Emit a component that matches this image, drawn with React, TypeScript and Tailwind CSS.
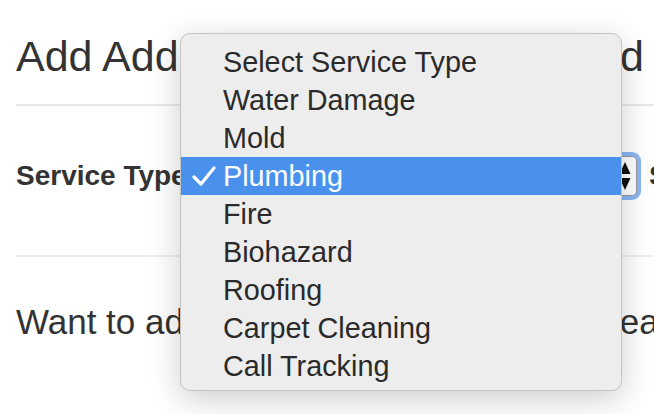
import React from "react";

const options = [
  "Select Service Type",
  "Water Damage",
  "Mold",
  "Plumbing",
  "Fire",
  "Biohazard",
  "Roofing",
  "Carpet Cleaning",
  "Call Tracking",
];

const selected = "Plumbing";

const Check = () => (
  <svg width="24" height="22" viewBox="0 0 24 22" fill="none">
    <path d="M2 12 L9 19 L22 3" stroke="white" strokeWidth="3.2" strokeLinecap="round" strokeLinejoin="round" />
  </svg>
);

const Stepper = () => (
  <svg width="12" height="32" viewBox="0 0 12 32">
    <path d="M6 2 L11.5 14 L0.5 14 Z" fill="#111" />
    <path d="M0.5 18 L11.5 18 L6 30 Z" fill="#111" />
  </svg>
);

const App = () => {
  return (
    <div className="relative w-[654px] h-[414px] overflow-hidden bg-white text-[#333] font-['Liberation_Sans',Arial,sans-serif]">
      <div className="pt-[31px] pl-4">
        <h1 className="text-[43px] leading-[50px] whitespace-nowrap">Add Additional Service Type Grid</h1>
      </div>
      <div className="mt-[23px] ml-4 h-[2px] bg-[#e9e9e9]" />

      <div className="mt-[46px] pl-4 flex items-center h-[48px] whitespace-nowrap">
        <label className="w-[170px] shrink-0 text-[28px] font-bold">Service Type</label>
        <div className="w-[451px] h-[40px] shrink-0 rounded-[5px] border border-[#9a9a9a] bg-white shadow-[0_0_0_4px_#8ab7f4] flex items-center justify-end pr-[5px]">
          <Stepper />
        </div>
        <label className="ml-[12px] shrink-0 text-[28px] font-bold">Sub Service</label>
      </div>

      <div className="mt-[55px] ml-4 h-[2px] bg-[#eeeeee]" />
      <p className="mt-[45px] pl-4 text-[35px] leading-[40px] whitespace-nowrap">
        Want to add additional service type? Please contact us.
      </p>

      {/* native select menu, open */}
      <div className="absolute left-[180px] top-[33px] w-[442px] h-[358px] pt-[9px] rounded-[10px] border border-[#c4c4c4] bg-[#ededed] shadow-[0_8px_32px_rgba(0,0,0,0.2)] overflow-hidden">
        {options.map((o) => (
          <div
            key={o}
            className={`relative h-[38px] pl-[42px] text-[28.8px] leading-[38px] whitespace-nowrap ${
              o === selected ? "bg-[#4a91ee] text-white" : "text-[#2a2a2a]"
            }`}
          >
            {o === selected && (
              <span className="absolute left-[11px] top-[8px]">
                <Check />
              </span>
            )}
            {o}
          </div>
        ))}
      </div>
    </div>
  );
};

export default App;
